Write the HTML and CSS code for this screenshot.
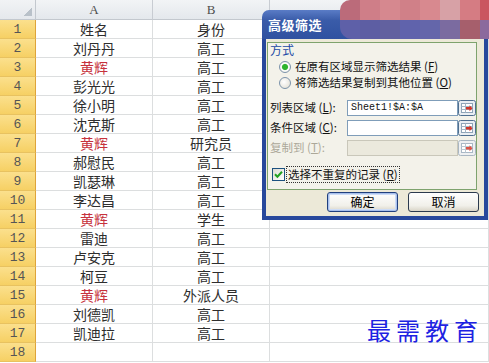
FILE: index.html
```html
<!DOCTYPE html>
<html lang="zh-CN">
<head>
<meta charset="utf-8">
<title>高级筛选</title>
<link rel="stylesheet" href="styles.css">
</head>
<body>
<div class="sheet">
  <div class="c corner"></div><div class="c hd">A</div><div class="c hd">B</div><div class="c hd"></div>
  <div class="c rh">1</div><div class="c">姓名</div><div class="c">身份</div><div class="c"></div>
  <div class="c rh">2</div><div class="c">刘丹丹</div><div class="c">高工</div><div class="c"></div>
  <div class="c rh">3</div><div class="c red">黄辉</div><div class="c">高工</div><div class="c"></div>
  <div class="c rh">4</div><div class="c">彭光光</div><div class="c">高工</div><div class="c"></div>
  <div class="c rh">5</div><div class="c">徐小明</div><div class="c">高工</div><div class="c"></div>
  <div class="c rh">6</div><div class="c">沈克斯</div><div class="c">高工</div><div class="c"></div>
  <div class="c rh">7</div><div class="c red">黄辉</div><div class="c">研究员</div><div class="c"></div>
  <div class="c rh">8</div><div class="c">郝慰民</div><div class="c">高工</div><div class="c"></div>
  <div class="c rh">9</div><div class="c">凯瑟琳</div><div class="c">高工</div><div class="c"></div>
  <div class="c rh">10</div><div class="c">李达昌</div><div class="c">高工</div><div class="c"></div>
  <div class="c rh">11</div><div class="c red">黄辉</div><div class="c">学生</div><div class="c"></div>
  <div class="c rh">12</div><div class="c">雷迪</div><div class="c">高工</div><div class="c"></div>
  <div class="c rh">13</div><div class="c">卢安克</div><div class="c">高工</div><div class="c"></div>
  <div class="c rh">14</div><div class="c">柯豆</div><div class="c">高工</div><div class="c"></div>
  <div class="c rh">15</div><div class="c red">黄辉</div><div class="c">外派人员</div><div class="c"></div>
  <div class="c rh">16</div><div class="c">刘德凯</div><div class="c">高工</div><div class="c"></div>
  <div class="c rh">17</div><div class="c">凯迪拉</div><div class="c">高工</div><div class="c"></div>
  <div class="c rh">18</div><div class="c"></div><div class="c"></div><div class="c"></div>
</div>

<div class="wm">最需教育</div>

<div class="dialog">
  <div class="titlebar">高级筛选</div>
  <div class="dlg-body">
    <div class="group">
      <div class="legend">方式</div>
      <div class="radio first"><span class="rb on"></span><span>在原有区域显示筛选结果 (<u>F</u>)</span></div>
      <div class="radio"><span class="rb"></span><span>将筛选结果复制到其他位置 (<u>O</u>)</span></div>
      <div class="fields">
        <div class="field">
          <span class="lbl">列表区域 (<u>L</u>):</span>
          <span class="input">Sheet1!$A:$A</span>
          <svg class="pick" viewBox="0 0 18 16" width="18" height="16"><rect x="0.5" y="0.5" width="17" height="15" rx="2" fill="#e9eef3" stroke="#4f6f90"/><rect x="3.5" y="3.5" width="11" height="9" fill="#fff" stroke="#8ea4b8"/><path d="M3.5 6.5H14.5M3.5 9.5H14.5M7.5 3.5V12.5" stroke="#a6b7c6"/><path d="M8 7h3.5V5.2L14.5 8.2 11.5 11.2V9.4H8z" fill="#d2362a"/></svg>
        </div>
        <div class="field">
          <span class="lbl">条件区域 (<u>C</u>):</span>
          <span class="input"></span>
          <svg class="pick" viewBox="0 0 18 16" width="18" height="16"><rect x="0.5" y="0.5" width="17" height="15" rx="2" fill="#e9eef3" stroke="#4f6f90"/><rect x="3.5" y="3.5" width="11" height="9" fill="#fff" stroke="#8ea4b8"/><path d="M3.5 6.5H14.5M3.5 9.5H14.5M7.5 3.5V12.5" stroke="#a6b7c6"/><path d="M8 7h3.5V5.2L14.5 8.2 11.5 11.2V9.4H8z" fill="#d2362a"/></svg>
        </div>
        <div class="field">
          <span class="lbl dis">复制到 (<u>T</u>):</span>
          <span class="input dis"></span>
          <svg class="pick" viewBox="0 0 18 16" width="18" height="16"><rect x="0.5" y="0.5" width="17" height="15" rx="2" fill="#eef0f2" stroke="#a9b6c2"/><rect x="3.5" y="3.5" width="11" height="9" fill="#fff" stroke="#a9b8c6"/><path d="M3.5 6.5H14.5M3.5 9.5H14.5M7.5 3.5V12.5" stroke="#bcc8d2"/><path d="M8 7h3.5V5.2L14.5 8.2 11.5 11.2V9.4H8z" fill="#dc5448"/></svg>
        </div>
      </div>
      <div class="check-row">
        <span class="cb"><svg viewBox="0 0 11 11" width="11" height="11"><path d="M2 5.3l2.4 2.5L9 2.8" stroke="#21a121" stroke-width="2" fill="none"/></svg></span>
        <span class="focus">选择不重复的记录 (<u>R</u>)</span>
      </div>
    </div>
    <div class="buttons">
      <button class="btn default">确定</button>
      <button class="btn">取消</button>
    </div>
  </div>
</div>

<div class="mosaic">
  <span class="m t1"></span><span class="m t2"></span><span class="m t3"></span><span class="m t4"></span><span class="m t5"></span><span class="m t6"></span><span class="m t7"></span><span class="m t8"></span>
  <span class="m b1"></span><span class="m b2"></span><span class="m b3"></span><span class="m b4"></span><span class="m b5"></span><span class="m b6"></span><span class="m b7"></span><span class="m b8"></span>
</div>
</body>
</html>
```
FILE: styles.css
```css
html, body {
  margin: 0;
  padding: 0;
}
body {
  width: 489px;
  height: 363px;
  overflow: hidden;
  position: relative;
  background: #fff;
  font-family: "Noto Sans CJK SC", "Noto Sans", sans-serif;
}

/* ---------- spreadsheet ---------- */
.sheet {
  display: grid;
  grid-template-columns: 36px 117px 117px 1fr;
  grid-template-rows: 20px;
  grid-auto-rows: 19px;
}
.c {
  box-sizing: border-box;
  border-right: 1px solid #dcdedf;
  border-bottom: 1px solid #dcdedf;
  display: flex;
  align-items: center;
  justify-content: center;
  font-size: 14px;
  line-height: 1;
  color: #2e2e2e;
}
.c.red {
  color: #c6313c;
}
.corner {
  background:
    linear-gradient(135deg, transparent 50%, #b9c1c9 50%) no-repeat right 3px bottom 3px / 8px 8px,
    linear-gradient(#f1f3f5, #e5e8ec);
  border-right-color: #c3c8ce;
  border-bottom-color: #c3c8ce;
}
.hd {
  background: linear-gradient(#f2f4f6, #e4e8ec);
  border-right-color: #c8ccd2;
  border-bottom-color: #c3c8ce;
  font-family: "Liberation Serif", serif;
  font-size: 13px;
  color: #4d4d4d;
}
.rh {
  background: linear-gradient(#fbe08d, #f6d064);
  border-right-color: #dea43a;
  border-bottom-color: #e8c260;
  font-family: "Liberation Mono", monospace;
  font-size: 13px;
  color: #555;
}

/* ---------- watermark ---------- */
.wm {
  position: absolute;
  left: 367px;
  top: 316px;
  font-size: 24px;
  line-height: 28px;
  letter-spacing: 5px;
  color: #1d22e2;
  z-index: 1;
}

/* ---------- dialog ---------- */
.dialog {
  position: absolute;
  left: 262px;
  top: 10px;
  width: 226px;
  height: 210px;
  display: flex;
  flex-direction: column;
  z-index: 2;
  font-size: 11.5px;
  color: #111;
}
.titlebar {
  flex: none;
  height: 29px;
  box-sizing: border-box;
  padding-left: 6px;
  display: flex;
  align-items: center;
  background: linear-gradient(#5a7cc6, #3a5ca9 35%, #2f51a0);
  border-radius: 7px 7px 0 0;
  color: #fff;
  font-size: 13px;
  font-weight: bold;
  letter-spacing: 0.5px;
}
.dlg-body {
  flex: 1;
  background: #ece9d8;
  border: 4px solid #27489c;
  border-top: 0;
  display: flex;
  flex-direction: column;
}
.group {
  margin: 3px 0 0 1px;
  width: 210px;
  height: 148px;
  box-sizing: border-box;
  border: 1px solid #7ea36d;
  background: #f3f2ea;
  display: flex;
  flex-direction: column;
}
.legend {
  color: #2149a6;
  font-size: 12px;
  line-height: 14px;
  padding-left: 2px;
}
.radio {
  height: 16px;
  display: flex;
  align-items: center;
  gap: 4px;
  padding-left: 11px;
  line-height: 1;
}
.radio.first {
  margin-top: 2px;
}
.rb {
  width: 12px;
  height: 12px;
  box-sizing: border-box;
  border-radius: 50%;
  border: 1px solid #7b93ab;
  background: radial-gradient(circle at 40% 40%, #fff, #dedbce);
}
.rb.on {
  background: radial-gradient(circle, #2db42d 0 2.5px, #7fd07f 3px, #fff 3.6px, #e2dfd2 100%);
}
.fields {
  margin-top: 9px;
  display: flex;
  flex-direction: column;
  gap: 4px;
}
.field {
  height: 16px;
  display: flex;
  align-items: center;
  padding-left: 2px;
  line-height: 1;
}
.lbl {
  width: 77px;
  white-space: nowrap;
}
.lbl.dis {
  color: #aca899;
}
.input {
  width: 111px;
  height: 16px;
  box-sizing: border-box;
  border: 1px solid #7f9db9;
  background: #fff;
  padding-left: 3px;
  display: flex;
  align-items: center;
  font-family: "Liberation Mono", monospace;
  font-size: 10px;
  color: #111;
}
.input.dis {
  background: #ebe9dd;
  border-color: #c9c7ba;
}
.pick {
  display: block;
  flex: none;
}
.check-row {
  margin-top: 9px;
  height: 18px;
  display: flex;
  align-items: center;
  padding-left: 4px;
  line-height: 1;
}
.cb {
  width: 13px;
  height: 13px;
  box-sizing: border-box;
  border: 1px solid #1c5180;
  background: linear-gradient(135deg, #dcdbd3, #fff);
  display: flex;
  align-items: center;
  justify-content: center;
}
.cb svg {
  display: block;
}
.focus {
  margin-left: 1px;
  border: 1px dotted #333;
  padding: 1px 1px;
  line-height: 13px;
  white-space: nowrap;
}
.buttons {
  margin-top: 2px;
  display: flex;
  justify-content: flex-end;
  gap: 10px;
  padding-right: 5px;
}
.btn {
  width: 71px;
  height: 20px;
  padding: 0;
  box-sizing: border-box;
  border: 1px solid #2b3a4e;
  border-radius: 3px;
  background: linear-gradient(#fefefe, #f1f0ea 70%, #d9d5c8);
  font-family: "Noto Sans CJK SC", sans-serif;
  font-size: 12px;
  line-height: 1;
  color: #000;
}
.btn.default {
  border-color: #21407e;
  box-shadow: inset 0 0 0 1px #a8c0ec, inset 0 0 0 2px #cddcf6;
}

/* ---------- pixelated mosaic ---------- */
.mosaic {
  position: absolute;
  left: 340px;
  top: 0;
  width: 149px;
  height: 39px;
  display: grid;
  grid-template-columns: repeat(8, 20px);
  grid-template-rows: 20px 19px;
  border-radius: 10px 0 0 12px;
  overflow: hidden;
  z-index: 3;
}
.t1 { background: #bb6b7a; }
.t2 { background: #cf7e88; }
.t3 { background: #d6888f; }
.t4 { background: #d08088; }
.t5 { background: #d8898f; }
.t6 { background: #d7a1a6; }
.t7 { background: #d57c83; }
.t8 { background: #ca5660; }
.b1 { background: #5e60a8; }
.b2 { background: #5d5ea3; }
.b3 { background: #62619f; }
.b4 { background: #6063ac; }
.b5 { background: #6466aa; }
.b6 { background: #7b6ba0; }
.b7 { background: #a65f6c; }
.b8 { background: #8b6a9d; }
```
